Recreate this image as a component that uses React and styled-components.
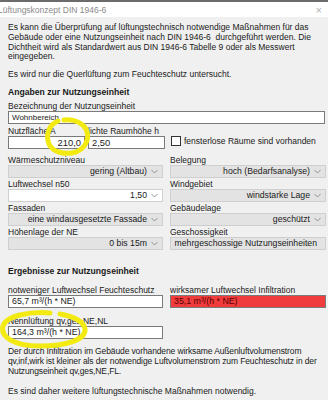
import React from 'react'
import styled, { createGlobalStyle } from 'styled-components'

const Global = createGlobalStyle`
  html, body {
    margin: 0;
    padding: 0;
    background: #f0f0f0;
  }
  body {
    font-family: "Liberation Sans", Arial, sans-serif;
    font-size: 8.5px;
    color: #1a1a1a;
  }
`

const Window = styled.div`
  position: relative;
  width: 328px;
  height: 400px;
  overflow: hidden;
  background: #f0f0f0;
  border-top: 2px solid #6b6b6b;
  box-sizing: border-box;
`

const TitleBar = styled.div`
  height: 15px;
  background: #fff;
  display: flex;
  align-items: center;
  justify-content: space-between;
  padding: 0 6px 0 0;
  color: #8a8a8a;
`

const TitleText = styled.span`
  margin-left: -2px;
`

const Close = styled.span`
  font-size: 11px;
  color: #b0b0b0;
`

const Body = styled.div`
  padding: 6px 2px 0 8px;
`

const Para = styled.p`
  margin: 0 0 ${({ $mb }) => $mb ?? 8}px;
  line-height: 9.8px;
  white-space: nowrap;
  letter-spacing: ${({ $ls }) => $ls ?? 0}px;
`

const Heading = styled.div`
  font-weight: bold;
  font-size: 8.6px;
  line-height: 10px;
  margin: ${({ $mt }) => $mt || 0}px 0 ${({ $mb }) => $mb ?? 4}px;
`

const Label = styled.div`
  line-height: 10px;
  height: 10px;
  white-space: nowrap;
`

const Field = styled.div`
  height: 13px;
  width: ${({ $w }) => ($w ? `${$w}px` : 'auto')};
  box-sizing: border-box;
  border: 1px solid #7a7a7a;
  background: ${({ $bg }) => $bg || '#fff'};
  color: ${({ $color }) => $color || '#1a1a1a'};
  display: flex;
  align-items: center;
  justify-content: ${({ $right }) => ($right ? 'flex-end' : 'flex-start')};
  padding: 0 3px;
  white-space: nowrap;
  font-size: ${({ $fs }) => $fs || 8.8}px;
`

const Select = styled.div`
  height: 13px;
  box-sizing: border-box;
  border: 1px solid #cfcfcf;
  background: ${({ $white }) => ($white ? '#fff' : '#e3e3e3')};
  display: flex;
  align-items: center;
  justify-content: flex-end;
  gap: 4px;
  padding: 0 4px;
  white-space: nowrap;
  font-size: 8.7px;
`

const Grid = styled.div`
  display: grid;
  grid-template-columns: 155px 156px;
  column-gap: 7px;
  row-gap: ${({ $rg }) => $rg ?? 1}px;
`

const Cell = styled.div`
  display: flex;
  flex-direction: column;
`

const Row = styled.div`
  display: flex;
  align-items: flex-start;
  gap: ${({ $gap }) => $gap ?? 3}px;
`

const Check = styled.div`
  display: flex;
  align-items: center;
  gap: 3px;
  margin-left: 6px;
  white-space: nowrap;
`

const Box = styled.span`
  width: 8px;
  height: 8px;
  border: 1px solid #333;
  background: #fff;
`

const Mark = styled.svg`
  position: absolute;
  left: 0;
  top: 0;
  pointer-events: none;
`

const Chevron = () => (
  <svg width="7" height="5" viewBox="0 0 7 5">
    <path d="M0.5 1 L3.5 4 L6.5 1" fill="none" stroke="#8a8a8a" strokeWidth="0.9" />
  </svg>
)

const Sel = ({ children, white }) => (
  <Select $white={white}>
    <span>{children}</span>
    <Chevron />
  </Select>
)

export default function App() {
  return (
    <Window>
      <Global />
      <TitleBar>
        <TitleText>Lüftungskonzept DIN 1946-6</TitleText>
        <Close>×</Close>
      </TitleBar>
      <Body>
        <Para>
          Es kann die Überprüfung auf lüftungstechnisch notwendige Maßnahmen für das<br />
          Gebäude oder eine Nutzungseinheit nach DIN 1946-6&nbsp; durchgeführt werden. Die<br />
          Dichtheit wird als Standardwert aus DIN 1946-6 Tabelle 9 oder als Messwert<br />
          eingegeben.
        </Para>
        <Para $mb={7}>Es wird nur die Querlüftung zum Feuchteschutz untersucht.</Para>
        <Heading>Angaben zur Nutzungseinheit</Heading>
        <Label>Bezeichnung der Nutzungseinheit</Label>
        <Field $fs={8} $w={317}>Wohnbereich</Field>
        <Row $gap={3} style={{ marginTop: 2 }}>
          <Cell>
            <Label>Nutzfläche A</Label>
            <Field $right $fs={9.4} $w={77}>210,0</Field>
          </Cell>
          <Cell>
            <Label>lichte Raumhöhe h</Label>
            <Row $gap={0}>
              <Field $fs={9.4} $w={77}>2,50</Field>
              <Check>
                <Box />
                <span>fensterlose Räume sind vorhanden</span>
              </Check>
            </Row>
          </Cell>
        </Row>
        <Grid style={{ marginTop: 6 }}>
          <Cell>
            <Label>Wärmeschutzniveau</Label>
            <Sel>gering (Altbau)</Sel>
          </Cell>
          <Cell>
            <Label>Belegung</Label>
            <Sel>hoch (Bedarfsanalyse)</Sel>
          </Cell>
          <Cell>
            <Label>Luftwechsel n50</Label>
            <Sel white>1,50</Sel>
          </Cell>
          <Cell>
            <Label>Windgebiet</Label>
            <Sel>windstarke Lage</Sel>
          </Cell>
          <Cell>
            <Label>Fassaden</Label>
            <Sel>eine windausgesetzte Fassade</Sel>
          </Cell>
          <Cell>
            <Label>Gebäudelage</Label>
            <Sel>geschützt</Sel>
          </Cell>
          <Cell>
            <Label>Höhenlage der NE</Label>
            <Sel>0 bis 15m</Sel>
          </Cell>
          <Cell>
            <Label>Geschossigkeit</Label>
            <Sel>mehrgeschossige Nutzungseinheiten</Sel>
          </Cell>
        </Grid>
        <Heading $mt={16} $mb={9}>Ergebnisse zur Nutzungseinheit</Heading>
        <Grid $rg={8}>
          <Cell>
            <Label>notweniger Luftwechsel Feuchteschutz</Label>
            <Field>65,7 m³/(h * NE)</Field>
          </Cell>
          <Cell>
            <Label>wirksamer Luftwechsel Infiltration</Label>
            <Field $bg="#f03c3c" $color="#5a0000">35,1 m³/(h * NE)</Field>
          </Cell>
          <Cell>
            <Label>Nennlüftung qv,ges,NE,NL</Label>
            <Field>164,3 m³/(h * NE)</Field>
          </Cell>
        </Grid>
        <Para style={{ marginTop: 8 }} $mb={11} $ls={-0.12}>
          Der durch Infiltration im Gebäude vorhandene wirksame Außenluftvolumenstrom<br />
          qv,inf,wirk ist kleiner als der notwendige Luftvolumenstrom zum Feuchteschutz in der<br />
          Nutzungseinheit qv,ges,NE,FL.
        </Para>
        <Para>Es sind daher weitere lüftungstechnische Maßnahmen notwendig.</Para>
      </Body>
      <Mark width="328" height="400" viewBox="0 0 328 400">
        <path
          d="M58 119 C50 122 45 132 49 142 C53 151 66 153 76 150 C86 146 90 136 86 127 C82 121 74 117 64 118"
          fill="none"
          stroke="#f2ea10"
          strokeWidth="5"
          strokeLinecap="round"
        />
        <path
          d="M50 311 C30 309 6 314 3 324 C0 335 14 344 40 344 C66 344 86 338 85 327 C84 319 72 314 60 312"
          fill="none"
          stroke="#f2ea10"
          strokeWidth="5"
          strokeLinecap="round"
        />
      </Mark>
    </Window>
  )
}
